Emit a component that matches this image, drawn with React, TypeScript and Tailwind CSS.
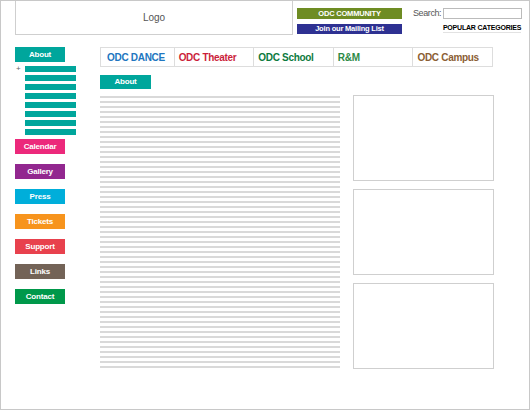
const bold = "font-['Liberation_Sans',Arial,sans-serif] font-bold";
const plain = "font-['Liberation_Sans',Arial,sans-serif]";

const sideLinks = [
  { label: "Calendar", bg: "bg-[#ec297b]" },
  { label: "Gallery", bg: "bg-[#92278f]" },
  { label: "Press", bg: "bg-[#00aeda]" },
  { label: "Tickets", bg: "bg-[#f7941d]" },
  { label: "Support", bg: "bg-[#e8414d]" },
  { label: "Links", bg: "bg-[#736357]" },
  { label: "Contact", bg: "bg-[#00984a]" },
];

const tabs = [
  { label: "ODC DANCE", color: "text-[#2176c0]", w: "w-[73px]" },
  { label: "ODC Theater", color: "text-[#cb1f3b]", w: "w-[80px]" },
  { label: "ODC School", color: "text-[#0c7a3e]", w: "w-[80px]" },
  { label: "R&M", color: "text-[#2d8a47]", w: "w-[80px]" },
  { label: "ODC Campus", color: "text-[#8b5e34]", w: "w-[80px]" },
];

const lines = Array.from({ length: 55 }, (_, i) => i);
const subBars = Array.from({ length: 8 }, (_, i) => i);

export default function App() {
  return (
    <div className="w-[530px] h-[410px] border border-[#c8c8c8] bg-white overflow-hidden">
      {/* header */}
      <div className="flex items-start">
        <div className={`ml-[14px] w-[278px] h-[34px] border border-t-0 border-[#cfcfcf] flex items-center justify-center text-[10px] text-[#555] ${plain}`}>
          Logo
        </div>
        <div className="ml-[4px] mt-[7px] w-[105px] flex flex-col">
          <div className={`h-[11px] bg-[#6e8c23] text-white text-[7.5px] tracking-[-0.2px] leading-[11px] text-center ${bold}`}>ODC COMMUNITY</div>
          <div className={`mt-[5px] h-[10px] bg-[#2e3192] text-white text-[7.5px] tracking-[-0.2px] leading-[10px] text-center ${bold}`}>Join our Mailing List</div>
        </div>
        <div className="ml-[11px] mt-[7px] flex flex-col items-end">
          <div className="flex items-center">
            <span className={`text-[9px] tracking-[-0.4px] text-[#555] leading-[11px] ${plain}`}>Search:</span>
            <div className="ml-[2px] w-[79px] h-[11px] border border-[#bbb]" />
          </div>
          <div className={`mt-[5px] mr-[1px] text-[7px] tracking-[-0.2px] leading-[8px] text-black border-b border-[#e2e2e2] ${bold}`}>POPULAR CATEGORIES</div>
        </div>
      </div>

      {/* body */}
      <div className="flex mt-[12px] pl-[14px]">
        <div className="w-[50px] shrink-0 flex flex-col">
          <div className={`h-[15px] bg-[#00a69c] text-white text-[8px] tracking-[-0.2px] leading-[15px] text-center ${bold}`}>About</div>
          <div className="mt-[4px] flex w-[61px]">
            <span className={`w-[10px] shrink-0 text-[8px] leading-[6px] text-[#666] pl-[1px] ${plain}`}>+</span>
            <div className="w-[51px] shrink-0 flex flex-col gap-[3px]">
              {subBars.map((i) => (
                <div key={i} className="h-[6px] bg-[#00a69c]" />
              ))}
            </div>
          </div>
          <div className="mt-[4px] flex flex-col gap-[10px]">
            {sideLinks.map((l) => (
              <div key={l.label} className={`h-[15px] ${l.bg} text-white text-[8px] tracking-[-0.2px] leading-[15px] text-center ${bold}`}>
                {l.label}
              </div>
            ))}
          </div>
        </div>

        <div className="ml-[35px] flex flex-col">
          <div className="flex w-[393px] h-[20px] border border-[#ddd]">
            {tabs.map((t, i) => (
              <div
                key={t.label}
                className={`${t.w} h-full flex items-center text-[10px] tracking-[-0.3px] ${t.color} ${bold} ${i > 0 ? "border-l border-[#ddd] pl-[4px]" : "pl-[6px]"}`}
              >
                {t.label}
              </div>
            ))}
          </div>
          <div className={`mt-[8px] w-[51px] h-[14px] bg-[#00a69c] text-white text-[8px] tracking-[-0.2px] leading-[14px] text-center ${bold}`}>About</div>
          <div className="mt-[6px] flex">
            <div className="w-[240px] pt-[1px] flex flex-col gap-[3px]">
              {lines.map((i) => (
                <div key={i} className="h-[2px] bg-[#d9d9d9]" />
              ))}
            </div>
            <div className="ml-[13px] w-[141px] flex flex-col gap-[8px]">
              <div className="h-[86px] border border-[#cfcfcf]" />
              <div className="h-[86px] border border-[#cfcfcf]" />
              <div className="h-[86px] border border-[#cfcfcf]" />
            </div>
          </div>
        </div>
      </div>
    </div>
  );
}
